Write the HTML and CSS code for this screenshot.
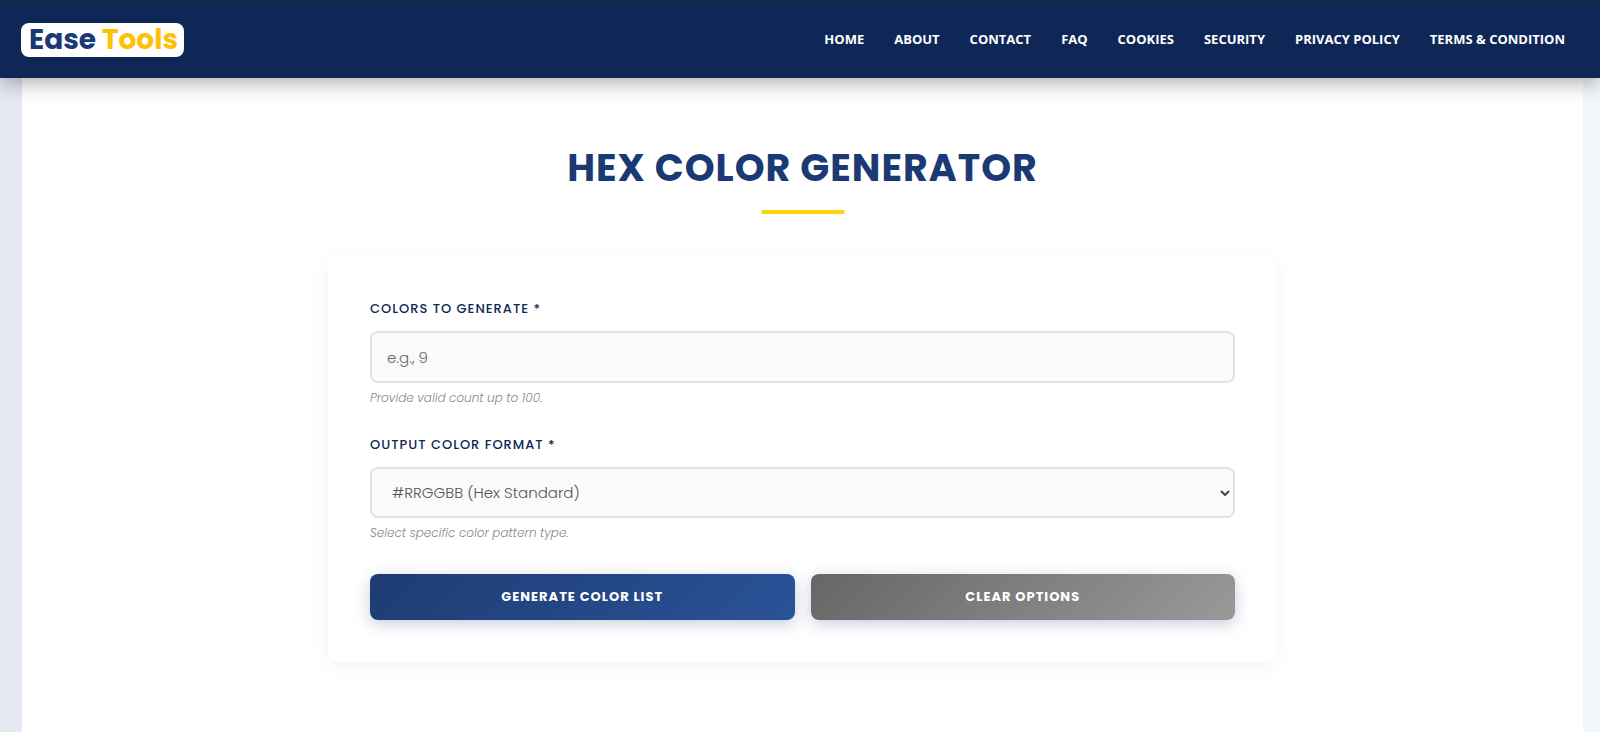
FILE: index.html
```html
<!DOCTYPE html>
<html lang="en">
  <head>
    <meta charset="UTF-8" />
    <meta name="viewport" content="width=device-width, initial-scale=1.0" />
    <title>Hex Color Generator - Ease Tools</title>
    <link rel="stylesheet" href="styles.css">
  </head>
  <body>
    <header class="navbar">
      <a class="logo" href="#">Ease <span>Tools</span></a>
      <nav class="nav-links">
        <a href="#">Home</a>
        <a href="#">About</a>
        <a href="#">Contact</a>
        <a href="#">FAQ</a>
        <a href="#">Cookies</a>
        <a href="#">Security</a>
        <a href="#">Privacy Policy</a>
        <a href="#">Terms &amp; Condition</a>
      </nav>
    </header>

    <main class="container">
      <h1>Hex Color Generator</h1>

      <form class="card" id="colorForm">
        <div class="form-group">
          <label for="colorCount">Colors to Generate *</label>
          <input type="text" inputmode="numeric" id="colorCount" placeholder="e.g., 9" />
          <p class="hint">Provide valid count up to 100.</p>
        </div>

        <div class="form-group">
          <label for="colorFormat">Output Color Format *</label>
          <div class="select-wrap">
            <select id="colorFormat">
              <option value="hex">#RRGGBB (Hex Standard)</option>
            </select>
            <svg class="chevron" viewBox="0 0 10 6" aria-hidden="true">
              <path d="M1 1l4 4 4-4" />
            </svg>
          </div>
          <p class="hint">Select specific color pattern type.</p>
        </div>

        <div class="buttons">
          <button type="button" class="btn btn-generate">Generate Color List</button>
          <button type="reset" class="btn btn-clear">Clear Options</button>
        </div>
      </form>
    </main>
  </body>
</html>
```
FILE: styles.css
```css
* {
  margin: 0;
  padding: 0;
  box-sizing: border-box;
}

body {
  font-family: Poppins, Inter, sans-serif;
  background: linear-gradient(to right, #e4e9f2, #f3f7fb);
  color: #333;
  display: flex;
  flex-direction: column;
  min-height: 100vh;
}

/* Navbar */
.navbar {
  position: relative;
  z-index: 1;
  display: flex;
  flex-wrap: wrap;
  justify-content: space-between;
  align-items: center;
  min-height: 78px;
  padding: 0 35px 0 21px;
  background-color: #0f2757;
  border-top: 1px solid #23273a;
  box-shadow: 0 4px 20px rgba(0, 0, 0, 0.35);
}

.logo {
  padding: 0 6px 0 8px;
  border-radius: 8px;
  background-color: #fff;
  color: #1b3a74;
  font-size: 28px;
  font-weight: 700;
  line-height: 34px;
  text-decoration: none;
}

.logo span {
  color: #ffc107;
}

.nav-links {
  display: flex;
  flex-wrap: wrap;
  gap: 8px 30px;
  padding-bottom: 2px;
}

.nav-links a {
  color: #fff;
  font-family: "Segoe UI", "Open Sans", sans-serif;
  font-size: 13px;
  font-weight: 700;
  line-height: 20px;
  text-decoration: none;
  text-transform: uppercase;
}

/* Page */
.container {
  flex: 1;
  margin: 0 17px 0 22px;
  padding: 60px 20px;
  background-color: #fff;
}

h1 {
  color: #1b3a74;
  font-size: 38px;
  font-weight: 700;
  line-height: 60px;
  letter-spacing: 1px;
  text-align: center;
  text-transform: uppercase;
}

h1::after {
  content: "";
  display: block;
  width: 84px;
  height: 4px;
  margin: 12px auto 0;
  border-radius: 2px;
  background-color: #ffd40a;
}

.card {
  max-width: 949px;
  margin: 41px auto 0;
  padding: 42px;
  border-radius: 12px;
  background-color: #fff;
  box-shadow: 0 4px 20px rgba(0, 0, 0, 0.05);
}

.form-group {
  margin-bottom: 25px;
}

label {
  display: block;
  margin-bottom: 10px;
  color: #0f2757;
  font-size: 13px;
  font-weight: 500;
  line-height: 24px;
  letter-spacing: 1px;
  text-transform: uppercase;
}

input,
select {
  display: block;
  width: 100%;
  height: 52px;
  border: 2px solid #e2e2e2;
  border-radius: 8px;
  background-color: #fafafa;
  color: #555;
  font-family: inherit;
  font-size: 15px;
  font-weight: 300;
}

input {
  padding: 0 15px;
}

input::placeholder {
  color: #666;
}

select {
  height: 51px;
  padding: 0 20px;
  appearance: none;
}

.select-wrap {
  position: relative;
}

.chevron {
  position: absolute;
  top: 23px;
  right: 5px;
  width: 10px;
  height: 6px;
  fill: none;
  stroke: #444;
  stroke-width: 2;
  pointer-events: none;
}

.hint {
  margin-top: 5px;
  color: #888;
  font-size: 12px;
  font-style: italic;
  font-weight: 300;
  line-height: 20px;
}

/* Buttons */
.buttons {
  display: flex;
  gap: 16px;
  margin-top: 31px;
}

.btn {
  flex: 1;
  height: 46px;
  border: none;
  border-radius: 8px;
  color: #fff;
  font-family: inherit;
  font-size: 13px;
  font-weight: 700;
  letter-spacing: 1px;
  text-transform: uppercase;
  box-shadow: 0 4px 15px rgba(27, 58, 116, 0.25);
  cursor: pointer;
}

.btn-generate {
  background: linear-gradient(135deg, #1e3c72, #2a5298);
}

.btn-clear {
  background: linear-gradient(135deg, #666, #999);
}
```
